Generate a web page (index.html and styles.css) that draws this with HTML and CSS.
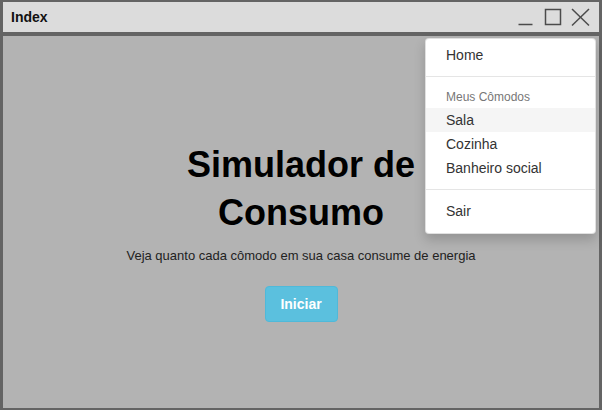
FILE: index.html
```html
<!DOCTYPE html>
<html lang="pt">
<head>
<meta charset="utf-8">
<title>Index</title>
<link rel="stylesheet" href="styles.css">
</head>
<body>
<div class="window">
  <div class="titlebar">
    <span class="title">Index</span>
    <svg class="controls" width="80" height="30" viewBox="0 0 80 30" aria-hidden="true">
      <line x1="5.5" y1="22.5" x2="19.5" y2="22.5" />
      <rect x="32.5" y="7.5" width="15" height="15" />
      <line x1="59" y1="7" x2="76" y2="23.5" />
      <line x1="76" y1="7" x2="59" y2="23.5" />
    </svg>
  </div>
  <div class="content">
    <h1 class="heading">Simulador de Consumo</h1>
    <p class="lead">Veja quanto cada cômodo em sua casa consume de energia</p>
    <button class="btn-start">Iniciar</button>
    <ul class="menu">
      <li class="item">Home</li>
      <li class="divider"></li>
      <li class="header">Meus Cômodos</li>
      <li class="item active">Sala</li>
      <li class="item">Cozinha</li>
      <li class="item">Banheiro social</li>
      <li class="divider"></li>
      <li class="item">Sair</li>
    </ul>
  </div>
</div>
</body>
</html>
```
FILE: styles.css
```css
html, body {
  margin: 0;
  padding: 0;
}
body {
  background: #646464;
  font-family: "Liberation Sans", Arial, sans-serif;
  width: 602px;
  height: 410px;
  overflow: hidden;
}
.window {
  box-sizing: border-box;
  width: 602px;
  height: 410px;
  border-style: solid;
  border-color: #646464;
  border-width: 2px 3px 2px 3px;
  display: flex;
  flex-direction: column;
}
.titlebar {
  height: 30px;
  flex: 0 0 30px;
  background: #dcdcdc;
  border-bottom: 4px solid #646464;
  display: flex;
  align-items: center;
  padding-left: 8px;
}
.title {
  font-size: 14px;
  font-weight: bold;
  color: #111;
  line-height: 30px;
}
.controls {
  margin-left: auto;
  margin-right: 6px;
  display: block;
}
.controls line, .controls rect {
  stroke: #4b4b4b;
  stroke-width: 1.5;
  fill: none;
}
.content {
  flex: 1;
  background: #b3b3b3;
  position: relative;
  text-align: center;
  padding-top: 105px;
}
.heading {
  margin: 0 auto;
  width: 270px;
  font-size: 36px;
  line-height: 48px;
  font-weight: bold;
  color: #000;
}
.lead {
  margin: 10px 0 0;
  font-size: 13px;
  line-height: 18px;
  color: #222;
}
.btn-start {
  margin-top: 21px;
  width: 73px;
  height: 36px;
  background: #5bc0de;
  border: 1px solid #4fb9d9;
  border-radius: 4px;
  color: #fff;
  font-family: "Liberation Sans", Arial, sans-serif;
  font-size: 14px;
  font-weight: bold;
  padding: 0;
}
.menu {
  position: absolute;
  top: 2px;
  right: 3px;
  width: 171px;
  box-sizing: border-box;
  margin: 0;
  padding: 4px 0 10px;
  list-style: none;
  text-align: left;
  background: #fff;
  border: 1px solid rgba(0,0,0,.12);
  border-radius: 4px;
  box-shadow: 0 6px 12px rgba(0,0,0,.175);
}
.item {
  padding: 3px 20px;
  height: 18px;
  line-height: 18px;
  font-size: 14px;
  color: #333;
}
.item.active {
  background: #f5f5f5;
}
.divider {
  height: 1px;
  margin: 9px 0;
  background: #e5e5e5;
}
.header {
  padding: 3px 20px 2px;
  font-size: 12px;
  line-height: 17px;
  color: #777;
}
```
